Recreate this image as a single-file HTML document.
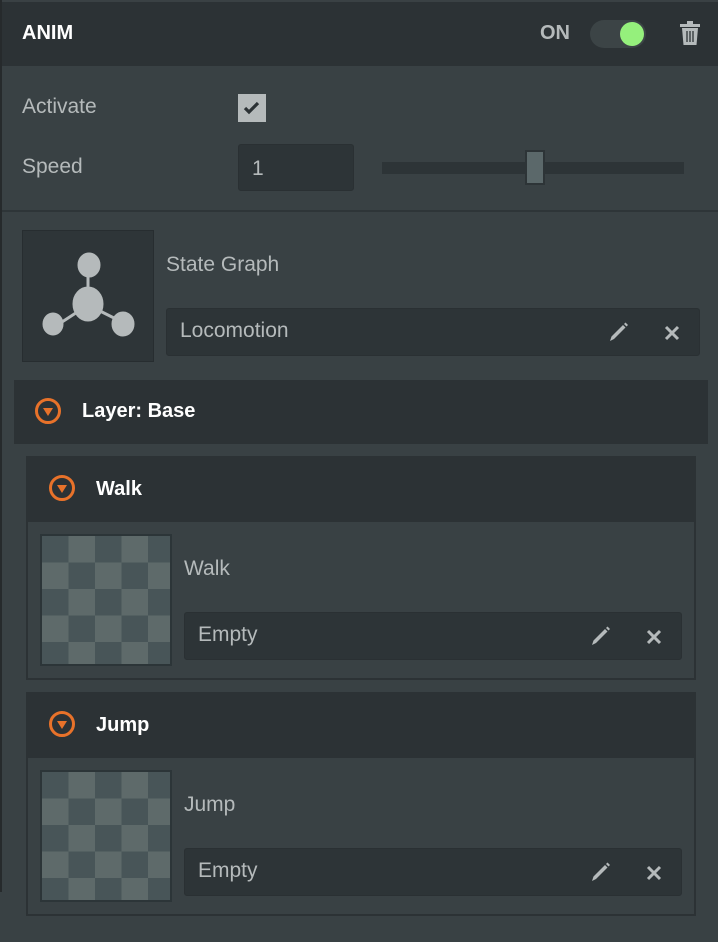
<!DOCTYPE html>
<html><head><meta charset="utf-8"><style>
*{box-sizing:border-box;margin:0;padding:0}
body{width:718px;height:942px;background:#394144;font-family:"Liberation Sans",sans-serif;position:relative;overflow:hidden;color:#b5babb}
.a{position:absolute}
.hdr{left:0;top:0;width:718px;height:66px;background:#2c3235;border-top:2px solid #3a4144}
.strip{left:0;top:0;width:2px;height:892px;background:#262a2c}
.t{font-size:21px;color:#b5babb}
.w{font-weight:bold;color:#fff;font-size:20px}
.inp{background:#2d3437;border:1px solid #2a3033;border-radius:3px}
.chk{background-image:conic-gradient(#5e6a6a 0 25%,#485558 0 50%,#5e6a6a 0 75%,#485558 0);background-size:53px 53px;border:2px solid #2c3538}
.circ{width:26px;height:26px;border:3px solid #e8722a;border-radius:50%}
.circ:after{content:"";position:absolute;left:5px;top:7px;border-left:5px solid transparent;border-right:5px solid transparent;border-top:8px solid #e8722a}
</style></head><body>
<div class="a hdr"></div>
<div class="a strip"></div>
<div class="a w" style="left:22px;top:22px">ANIM</div>
<div class="a" style="left:540px;top:22px;font-size:20px;font-weight:bold;color:#b5babb">ON</div>
<div class="a" style="left:590px;top:20px;width:56px;height:28px;border-radius:14px;background:#3c4446"></div>
<div class="a" style="left:620px;top:22px;width:24px;height:24px;border-radius:50%;background:#95f07c"></div>
<svg class="a" style="left:679px;top:21px" width="22" height="25" viewBox="0 0 22 25"><rect x="1" y="3" width="20" height="3" fill="#b5babb"/><rect x="8" y="0" width="6" height="3" fill="#b5babb"/><path d="M3 7h16l-1.5 17h-13z" fill="#b5babb"/><path d="M8 10v11M11 10v11M14 10v11" stroke="#2c3235" stroke-width="1.3"/></svg>

<div class="a t" style="left:22px;top:95px">Activate</div>
<div class="a" style="left:238px;top:94px;width:28px;height:28px;background:#b5babb"></div>
<svg class="a" style="left:242px;top:99px" width="20" height="18"><path d="M3 9l4 4 9-9" stroke="#2c3235" stroke-width="3.2" fill="none"/></svg>
<div class="a t" style="left:22px;top:155px">Speed</div>
<div class="a inp" style="left:238px;top:144px;width:116px;height:47px"></div>
<div class="a t" style="left:252px;top:157px">1</div>
<div class="a" style="left:382px;top:162px;width:302px;height:12px;background:#2d3437"></div>
<div class="a" style="left:525px;top:150px;width:20px;height:35px;background:#5b686a;border:2px solid #2d3437"></div>
<div class="a" style="left:2px;top:210px;width:716px;height:2px;background:#2e3538"></div>

<div class="a" style="left:22px;top:230px;width:132px;height:132px;background:#2e3538;border:1px solid #272d30"></div>
<svg class="a" style="left:22px;top:230px" width="132" height="132"><g fill="#b5babb" stroke="#b5babb"><line x1="66" y1="40" x2="66" y2="70" stroke-width="3"/><line x1="66" y1="75" x2="40" y2="92" stroke-width="3"/><line x1="66" y1="75" x2="100" y2="92" stroke-width="3"/><ellipse cx="67" cy="35" rx="11" ry="12"/><ellipse cx="66" cy="74" rx="15" ry="17"/><ellipse cx="31" cy="94" rx="10" ry="11"/><ellipse cx="101" cy="94" rx="11" ry="12"/></g></svg>
<div class="a t" style="left:166px;top:253px">State Graph</div>
<div class="a inp" style="left:166px;top:308px;width:534px;height:48px"></div>
<div class="a t" style="left:180px;top:319px">Locomotion</div>

<div class="a" style="left:14px;top:380px;width:694px;height:64px;background:#2c3235"></div>
<div class="a circ" style="left:35px;top:398px"></div>
<div class="a w" style="left:82px;top:400px">Layer: Base</div>

<div class="a" style="left:26px;top:456px;width:670px;height:224px;border:2px solid #2c3235"></div>
<div class="a" style="left:26px;top:456px;width:670px;height:66px;background:#2c3235"></div>
<div class="a circ" style="left:49px;top:475px"></div>
<div class="a w" style="left:96px;top:478px">Walk</div>
<div class="a chk" style="left:40px;top:534px;width:132px;height:132px"></div>
<div class="a t" style="left:184px;top:557px">Walk</div>
<div class="a inp" style="left:184px;top:612px;width:498px;height:48px"></div>
<div class="a t" style="left:198px;top:623px">Empty</div>

<div class="a" style="left:26px;top:692px;width:670px;height:224px;border:2px solid #2c3235"></div>
<div class="a" style="left:26px;top:692px;width:670px;height:66px;background:#2c3235"></div>
<div class="a circ" style="left:49px;top:711px"></div>
<div class="a w" style="left:96px;top:714px">Jump</div>
<div class="a chk" style="left:40px;top:770px;width:132px;height:132px"></div>
<div class="a t" style="left:184px;top:793px">Jump</div>
<div class="a inp" style="left:184px;top:848px;width:498px;height:48px"></div>
<div class="a t" style="left:198px;top:859px">Empty</div>

<svg width="0" height="0" style="position:absolute"><defs><g id="pen"><path d="M1 19l1.5-4.5L14 3l2.5 2.5L5 17z" fill="#b5babb"/><path d="M15 2l1.5-1.5 2.5 2.5L17.5 4.5z" fill="#b5babb"/></g><g id="x"><path d="M2 2l12 12M14 2L2 14" stroke="#b5babb" stroke-width="3"/></g></defs></svg>
<svg class="a" style="left:609px;top:322px" width="20" height="20"><use href="#pen"/></svg>
<svg class="a" style="left:664px;top:325px" width="16" height="16"><use href="#x"/></svg>
<svg class="a" style="left:591px;top:626px" width="20" height="20"><use href="#pen"/></svg>
<svg class="a" style="left:646px;top:629px" width="16" height="16"><use href="#x"/></svg>
<svg class="a" style="left:591px;top:862px" width="20" height="20"><use href="#pen"/></svg>
<svg class="a" style="left:646px;top:865px" width="16" height="16"><use href="#x"/></svg>
</body></html>
